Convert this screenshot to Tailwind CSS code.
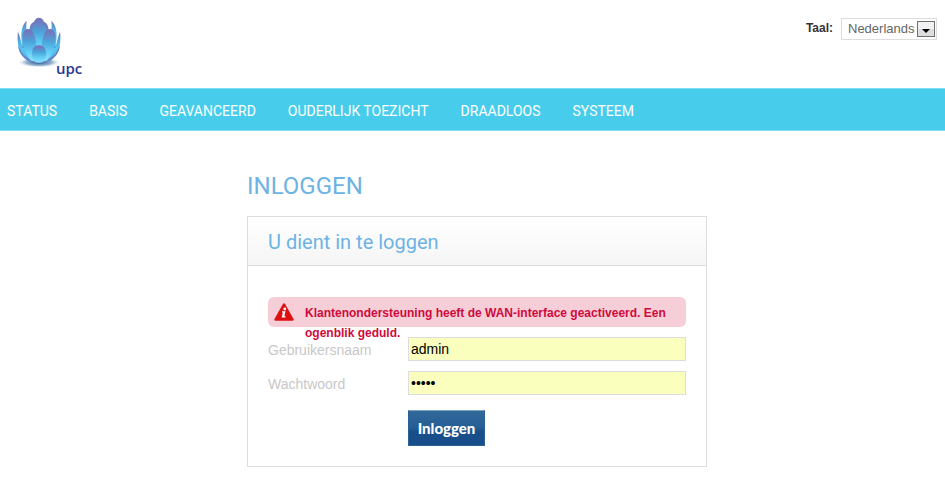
<!DOCTYPE html>
<html lang="nl">
<head>
<meta charset="utf-8">
<meta name="viewport" content="width=device-width, initial-scale=1">
<title>Inloggen</title>
<script src="https://cdn.jsdelivr.net/npm/@tailwindcss/browser@4"></script>
</head>
<body class="bg-white font-['Liberation_Sans',Arial,sans-serif]">
<header class="flex items-start justify-between h-22 pl-4 pr-2 pt-4">
  <a href="#" aria-label="upc" class="flex items-end">
    <svg class="w-12 h-14" viewBox="0 0 144 168" aria-hidden="true">
      <defs>
        <linearGradient id="petal" x1="0" y1="0" x2="0" y2="1">
          <stop offset="0" stop-color="#7d6fb6"/><stop offset=".15" stop-color="#6a80c2"/><stop offset=".4" stop-color="#4aa5dc"/><stop offset=".7" stop-color="#62cdf5"/><stop offset="1" stop-color="#8fe3fd"/>
        </linearGradient>
        <linearGradient id="outer" x1="0" y1="0" x2="0" y2="1">
          <stop offset="0" stop-color="#756fb8"/><stop offset=".35" stop-color="#4cb4e6"/><stop offset=".8" stop-color="#6bd3f8"/><stop offset="1" stop-color="#3c8fcf"/>
        </linearGradient>
        <radialGradient id="shade"><stop offset="0" stop-color="#1c4a86"/><stop offset=".6" stop-color="#6d94bd" stop-opacity=".7"/><stop offset="1" stop-color="#fff" stop-opacity="0"/></radialGradient>
      </defs>
      <ellipse cx="69" cy="139" rx="66" ry="16" fill="url(#shade)"/>
      <path d="M6 47C2 72 5 112 34 134Q69 146 104 134C133 112 136 72 132 47C125 62 124 76 119 90H19C14 76 13 62 6 47Z" fill="url(#outer)"/>
      <path d="M32 14C12 32 14 64 20 96H48C38 66 27 46 32 14ZM106 14C126 32 124 64 118 96H90C100 66 111 46 106 14Z" fill="url(#outer)"/>
      <path d="M54 18C34 24 38 66 46 110H92C100 66 104 24 84 18Z" fill="url(#petal)"/>
      <path d="M69 5C42 7 47 66 54 114H84C91 66 96 7 69 5Z" fill="url(#petal)"/>
      <path d="M6 88C8 112 24 136 60 141L50 118C30 116 14 104 6 88ZM132 88C130 112 114 136 78 141L88 118C108 116 124 104 132 88Z" fill="#6b83c5"/>
      <path d="M10 94C16 114 30 126 56 135L50 112C34 110 20 104 10 94ZM128 94C122 114 108 126 82 135L88 112C104 110 118 104 128 94Z" fill="#52c0ef"/>
      <path d="M35 39C9 41 15 104 46 134L64 136C60 96 63 39 35 39ZM103 39C129 41 123 104 92 134L74 136C78 96 75 39 103 39Z" fill="url(#petal)"/>
      <path d="M69 88C42 89 45 124 57 138Q69 143 81 138C93 124 96 89 69 88Z" fill="url(#petal)"/>
    </svg>
    <span class="-ml-2 -mb-1 text-[15px] leading-4 font-semibold text-[#2a3890] font-['Open_Sans',sans-serif]">upc</span>
  </a>
  <div class="flex items-start pt-0.5">
    <label for="taal" class="mr-2 text-xs leading-5 font-bold text-[#333]">Taal:</label>
    <div class="relative">
      <select id="taal" class="block appearance-none w-24 h-[22px] pl-1.5 border border-[#ddd] bg-white text-[13px] text-[#666]"><option>Nederlands</option></select>
      <svg class="absolute right-0.5 top-[3px] w-[18px] h-4 pointer-events-none" viewBox="0 0 18 16" aria-hidden="true"><rect x=".5" y=".5" width="17" height="15" fill="#dedede" stroke="#707070"/><path d="M1 1h16v7H1z" fill="#f2f2f2"/><path d="M5 8h8l-4 4z" fill="#000"/></svg>
    </div>
  </div>
</header>
<nav class="h-[43px] flex items-center gap-8 pl-[7px] pt-0.5 bg-[#47cdeb] border-y border-[#7fdef2] text-sm text-white whitespace-nowrap font-[Roboto,sans-serif]">
  <a href="#">STATUS</a><a href="#">BASIS</a><a href="#">GEAVANCEERD</a><a href="#">OUDERLIJK TOEZICHT</a><a href="#">DRAADLOOS</a><a href="#">SYSTEEM</a>
</nav>
<main class="pl-[9px] pt-10">
  <div class="mx-auto max-w-[460px]">
    <h1 class="text-2xl leading-[30px] text-[#6db3e3] font-[Roboto,sans-serif]">INLOGGEN</h1>
    <section class="mt-[15px] border border-[#ddd]">
      <h2 class="h-[49px] px-5 text-xl leading-[50px] text-[#6db3e3] font-[Roboto,sans-serif] bg-linear-to-b from-white to-[#f5f5f5] border-b border-[#ddd]">U dient in te loggen</h2>
      <form class="px-5 pt-[31px] pb-5">
        <div role="alert" class="h-[30px] flex gap-[11px] pl-1.5 pr-2 pt-1.5 rounded-md bg-[#f6ced8] text-xs leading-5 font-bold text-[#cf0a3c]">
          <svg class="shrink-0 w-5 h-[18px]" viewBox="0 0 20 18" aria-hidden="true"><path d="M10 1.5L18.5 16.5H1.5Z" fill="#dd1111" stroke="#dd1111" stroke-width="2.4" stroke-linejoin="round"/><circle cx="10.8" cy="6" r="1.4" fill="#fff"/><path d="M8 8.2h3.5l-1.2 5h1.2v1.2H7.7l1.2-5H8z" fill="#fff"/></svg>
          <p>Klantenondersteuning heeft de WAN-interface geactiveerd. Een ogenblik geduld.</p>
        </div>
        <div class="mt-2.5 grid grid-cols-[140px_1fr] gap-y-2.5 items-center text-sm">
          <label for="naam" class="pt-0.5 text-[#c8c8c8]">Gebruikersnaam</label>
          <input id="naam" type="text" value="admin" class="w-full min-w-0 h-6 px-0.5 border border-[#ddd] bg-[#faffbd] text-black">
          <label for="ww" class="pt-0.5 text-[#c8c8c8]">Wachtwoord</label>
          <input id="ww" type="password" value="admin" class="w-full min-w-0 h-6 px-0.5 border border-[#ddd] bg-[#faffbd] text-black">
        </div>
        <button type="submit" class="block mt-[15px] ml-[140px] h-9 w-[77px] border border-[#2d6193] border-t-[#7ba0c0] bg-linear-to-b from-[#32699b] via-[#255e95] via-50% to-[#184f8a] to-60% text-[15px] font-black text-white font-[Lato,sans-serif]">Inloggen</button>
      </form>
    </section>
  </div>
</main>
</body>
</html>
